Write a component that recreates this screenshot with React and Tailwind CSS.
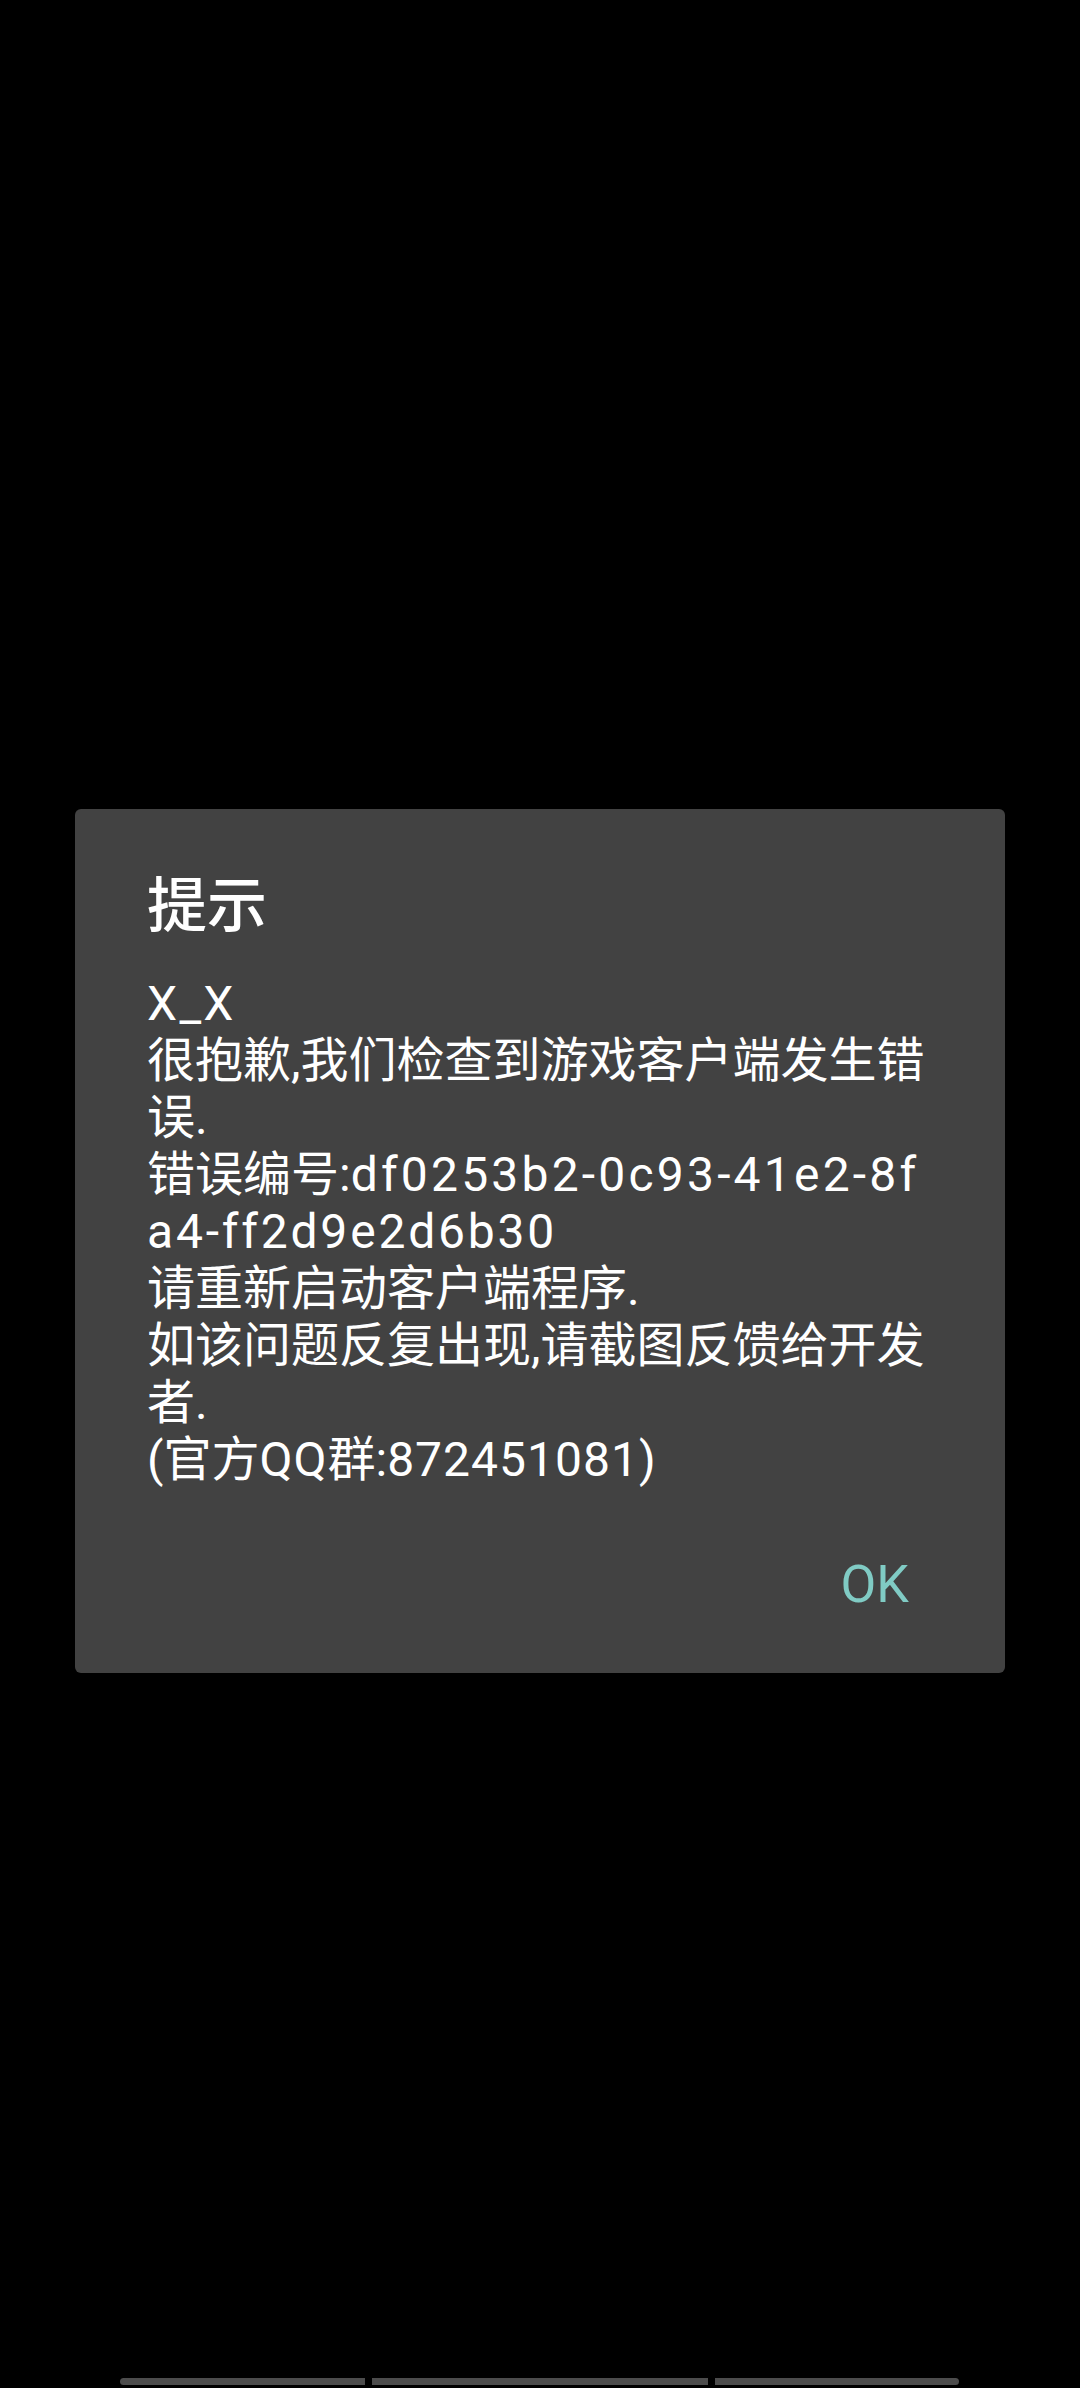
export default function App() {
  return (
    <div
      className="flex h-[2388px] w-[1080px] flex-col bg-black pt-[809px]"
      style={{ fontFamily: 'Roboto, "Noto Sans CJK SC", sans-serif' }}
    >
      <div className="ml-[75px] w-[930px] rounded-[6px] bg-[#424242] pb-[58px] pl-[72px] pr-[72px] pt-[63px] text-white">
        <div className="text-[60px] font-medium leading-[70px]">提示</div>
        <div className="mt-[33px] whitespace-nowrap text-[48px] leading-[57px]">
          <div className="tracking-[2.3px]">X_X</div>
          <div>很抱歉,我们检查到游戏客户端发生错</div>
          <div>误.</div>
          <div>
            错误编号:<span className="tracking-[3.2px]">df0253b2-0c93-41e2-8f</span>
          </div>
          <div className="tracking-[2.8px]">a4-ff2d9e2d6b30</div>
          <div>请重新启动客户端程序.</div>
          <div>如该问题反复出现,请截图反馈给开发</div>
          <div>者.</div>
          <div>
            (官方<span className="tracking-[1px]">QQ</span>群:
            <span className="tracking-[1px]">872451081)</span>
          </div>
        </div>
        <div className="mt-[66px] flex justify-end pr-[24px]">
          <span className="text-[52px] leading-[61px] text-[#80cbc4]">OK</span>
        </div>
      </div>

      <div className="mt-auto mb-[3px] ml-[120px] flex gap-[7px]">
        <div className="h-[7px] w-[245px] rounded-l-full bg-[#4c4c4c]" />
        <div className="h-[7px] w-[336px] bg-[#4c4c4c]" />
        <div className="h-[7px] w-[244px] rounded-r-full bg-[#4c4c4c]" />
      </div>
    </div>
  );
}
